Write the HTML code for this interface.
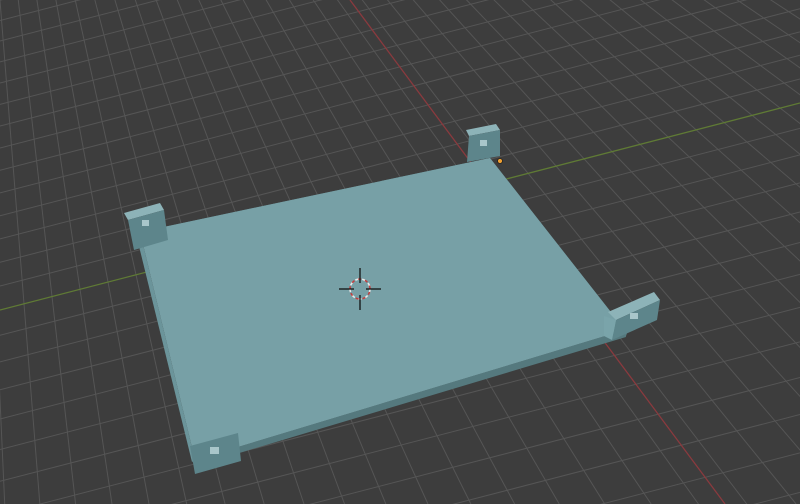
<!DOCTYPE html>
<html><head><style>
html,body{margin:0;padding:0;background:#3d3d3d;width:800px;height:504px;overflow:hidden}
svg{display:block;overflow:hidden;position:absolute;left:0;top:0}
</style></head><body>
<svg id="s" width="800" height="504" viewBox="0 0 800 504" xmlns="http://www.w3.org/2000/svg">
<rect width="800" height="504" fill="#3d3d3d"/>
<g id="grid" stroke="#555" stroke-width="1" fill="none"></g>
<line x1="350" y1="0" x2="725" y2="504" stroke="#8a3a3e" stroke-width="1.3"/>
<line x1="0" y1="310" x2="800" y2="103" stroke="#5f7a35" stroke-width="1.3"/>
<polygon points="140,232 490,158 625,330 195,460 196,465 626,336 628,330" fill="#5b8288"/>
<polygon points="140,232 490,158 625,330 195,460" fill="#77a0a6"/>
<polygon points="195,460 625,330 626,337 196,466" fill="#55797e"/>
<polygon points="140,232 195,460 192,462 136,234" fill="#6b949a"/>
<polygon points="124,213 160,203 164,210 128,220" fill="#8db3b8"/>
<polygon points="128,220 164,210 168,240 134,250" fill="#5d858b"/>
<rect x="142" y="220" width="7" height="6" fill="#a9c6ca"/>
<polygon points="466,130 496,124 500,130 469,136" fill="#8db3b8"/>
<polygon points="469,136 500,130 500,156 467,162" fill="#5d858b"/>
<rect x="480" y="140" width="7" height="6" fill="#a9c6ca"/>
<circle cx="500" cy="161" r="2.5" fill="#f0a030" stroke="#222" stroke-width="0.8"/>
<polygon points="608,312 654,292 660,300 616,320" fill="#8db3b8"/>
<polygon points="616,320 660,300 657,320 612,340" fill="#5d858b"/>
<polygon points="604,316 616,320 612,340 604,336" fill="#7aa4aa"/>
<rect x="630" y="313" width="8" height="6" fill="#a9c6ca"/>
<polygon points="190,446 238,433 241,461 195,474" fill="#5d858b"/>
<rect x="210" y="447" width="9" height="7" fill="#a9c6ca"/>
<circle cx="360" cy="289" r="10" fill="none" stroke="#e8e8e8" stroke-width="1.6" stroke-dasharray="4 3"/>
<circle cx="360" cy="289" r="10" fill="none" stroke="#c04040" stroke-width="1.6" stroke-dasharray="3 4" stroke-dashoffset="4"/>
<g stroke="#111" stroke-width="1.3">
<line x1="339" y1="289" x2="354" y2="289"/><line x1="366" y1="289" x2="381" y2="289"/>
<line x1="360" y1="268" x2="360" y2="283"/><line x1="360" y1="295" x2="360" y2="310"/>
</g>
</svg>
<script>
var g=document.getElementById('grid'),ns='http://www.w3.org/2000/svg';
function L(a,b,c,d){var l=document.createElementNS(ns,'line');l.setAttribute('x1',a);l.setAttribute('y1',b);l.setAttribute('x2',c);l.setAttribute('y2',d);g.appendChild(l);}
var y=310, sp=24;
for(var i=0;i<30;i++){y-=sp*(1-i*0.012);if(y<-250)break;L(0,y,800,y-207);}
y=310;for(i=1;i<30;i++){y+=24+i*1.3;if(y>800)break;L(0,y,800,y-207);}
var vx=-42,vy=-530;
for(var k=-25;k<25;k++){var px=360+k*28,py=310-0.259*px;var dx=px-vx,dy=py-vy;var t=(504-vy)/dy;L(vx,vy,vx+dx*t,504);}
</script>
</body></html>
